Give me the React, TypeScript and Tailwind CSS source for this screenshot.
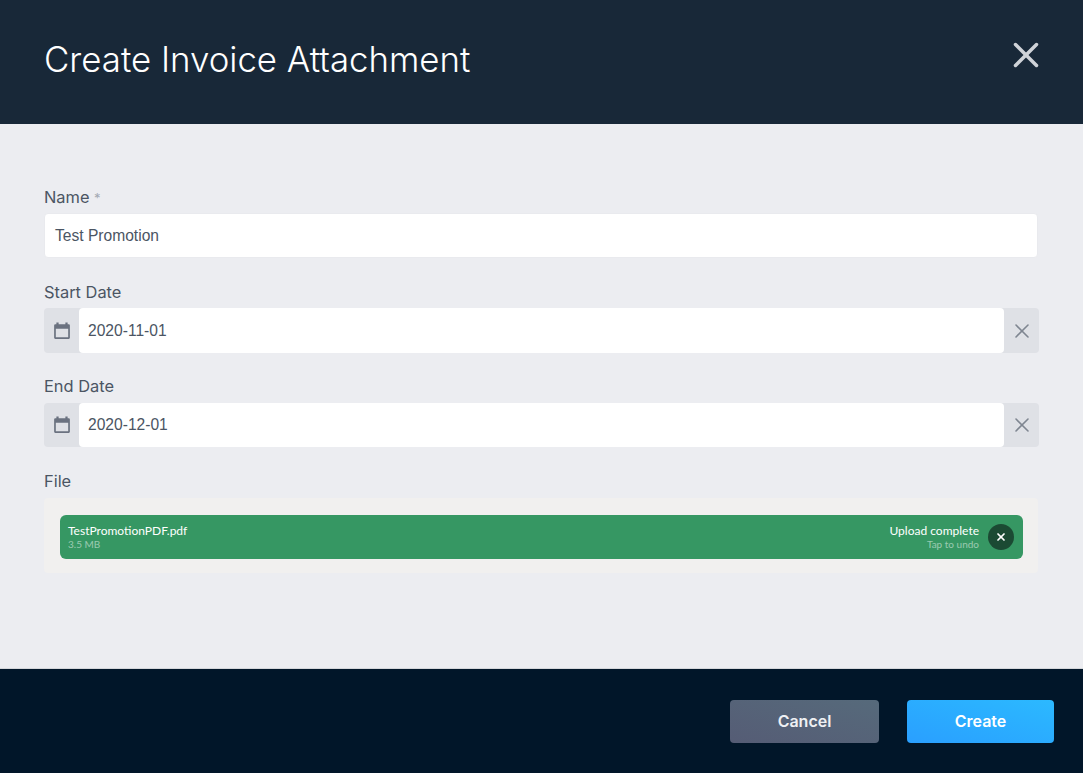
import { X } from "lucide-react";

const UI_FONT = "font-['Inter','Noto_Sans',sans-serif]";
const INPUT_FONT = "font-['Liberation_Sans',Arial,sans-serif]";

const DATES = [
  { label: "Start Date", value: "2020-11-01", mt: "mt-[24px]", lh: "h-[26px]", h: "h-[45px]" },
  { label: "End Date", value: "2020-12-01", mt: "mt-[23px]", lh: "h-[27px]", h: "h-[44px]" },
];

function DateField({ label, value, mt, lh, h }: { label: string; value: string; mt: string; lh: string; h: string }) {
  return (
    <div className={mt}>
      <label className={`block ${lh} text-[16.4px] leading-[20px] text-[#4b5563]`}>{label}</label>
      <div className={`flex ${h} w-[995px] rounded-[4px] bg-[#dfe1e6]`}>
        <div className="flex w-[35px] shrink-0 items-center justify-center">
          <svg width="18" height="18" viewBox="0 0 16 16" className="fill-[#6b7280]">
            <path d="M3 0.5h2V2h6V0.5h2V2h1a1 1 0 0 1 1 1v11a1 1 0 0 1-1 1H2a1 1 0 0 1-1-1V3a1 1 0 0 1 1-1h1V0.5zM2.5 6v7.5h11V6h-11z" />
          </svg>
        </div>
        <div
          className={`flex flex-1 items-center rounded-[4px] bg-white pl-[9px] text-[15.6px] text-[#4b5563] ${INPUT_FONT}`}
        >
          {value}
        </div>
        <div className="flex w-[35px] shrink-0 items-center justify-center">
          <X className="h-[24px] w-[24px] text-[#7f8691]" strokeWidth={1.6} />
        </div>
      </div>
    </div>
  );
}

export default function App() {
  return (
    <div className={`flex h-[773px] w-[1083px] flex-col overflow-hidden bg-[#ecedf1] ${UI_FONT}`}>
      {/* Header */}
      <header className="flex h-[124px] shrink-0 items-start justify-between bg-[#182838] pl-[44px] pr-[36px]">
        <h1 className="mt-[38px] text-[34.8px] font-[350] leading-[42px] text-white">Create Invoice Attachment</h1>
        <X className="mt-[34px] h-[42px] w-[42px] text-[#cfd3d8]" strokeWidth={2} />
      </header>

      {/* Form */}
      <main className="flex-1 border-b border-[#d4d6da] pl-[44px] pt-[63px]">
        <label className="block h-[26px] text-[16.4px] leading-[20px] text-[#4b5563]">
          Name <span className="text-[13px] text-[#a3a9b3]">*</span>
        </label>
        <div
          className={`flex h-[45px] w-[994px] items-center rounded-[4px] border border-[#e9eaee] bg-white pl-[10px] text-[15.6px] text-[#4b5563] ${INPUT_FONT}`}
        >
          Test Promotion
        </div>

        {DATES.map((d) => (
          <DateField key={d.label} {...d} />
        ))}

        <label className="mt-[24px] block h-[27px] text-[16.4px] leading-[20px] text-[#4b5563]">File</label>
        <div className="h-[75px] w-[994px] rounded-[4px] bg-[#f1f0ef] pl-[16px] pt-[17px]">
          <div className="flex h-[44px] w-[963px] items-center justify-between rounded-[6px] bg-[#369763] pl-[8px] pr-[9px] font-['Lato',sans-serif] text-white">
            <div>
              <div className="text-[12px] leading-[15px]">TestPromotionPDF.pdf</div>
              <div className="text-[10px] leading-[13px] text-white/50">3.5 MB</div>
            </div>
            <div className="flex items-center gap-[9px]">
              <div className="text-right">
                <div className="text-[12px] leading-[15px]">Upload complete</div>
                <div className="text-[10px] leading-[13px] text-white/50">Tap to undo</div>
              </div>
              <div className="flex h-[26px] w-[26px] items-center justify-center rounded-full bg-[#1b4a33]">
                <X className="h-[12px] w-[12px] text-white" strokeWidth={3.5} />
              </div>
            </div>
          </div>
        </div>
      </main>

      {/* Footer */}
      <footer className="flex h-[104px] shrink-0 items-start justify-end gap-[28px] bg-[#011629] pr-[29px] pt-[31px]">
        <button className="h-[43px] w-[149px] rounded-[4px] bg-linear-to-tr from-[#555c75] to-[#566a7b] pb-[2px] text-[16px] font-semibold text-[#eef0f3]">
          Cancel
        </button>
        <button className="h-[43px] w-[147px] rounded-[4px] bg-linear-to-tr from-[#2a9fff] to-[#2cb9ff] pb-[2px] text-[16px] font-semibold text-white">
          Create
        </button>
      </footer>
    </div>
  );
}
